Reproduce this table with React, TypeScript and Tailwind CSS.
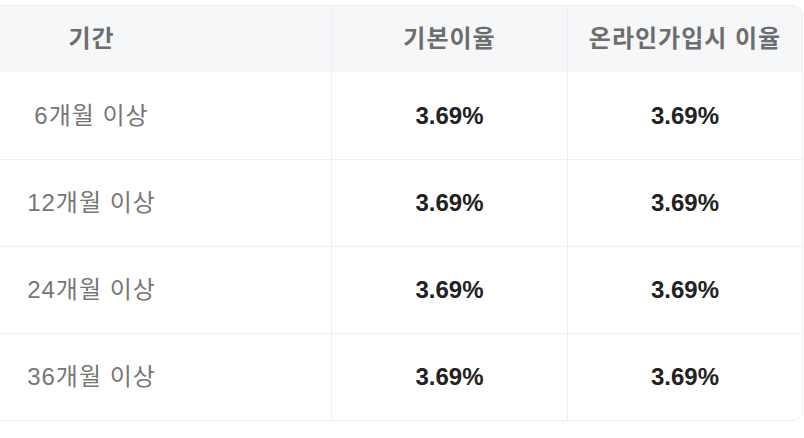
import React from "react";

const rows = [
    { term: "6개월 이상", base: "3.69%", online: "3.69%" },
    { term: "12개월 이상", base: "3.69%", online: "3.69%" },
    { term: "24개월 이상", base: "3.69%", online: "3.69%" },
    { term: "36개월 이상", base: "3.69%", online: "3.69%" },
];

const App = () => {
    return (
        <div className="w-[804px] h-[438px] overflow-hidden bg-white pt-[5px] font-['Liberation_Sans','Noto_Sans_CJK_KR',sans-serif]">
            <div className="ml-[-149px] w-[952px] border border-[#eceef1] rounded-[10px] overflow-hidden">
                {/* Header */}
                <div className="grid grid-cols-[479px_236px_1fr] h-[66px] bg-[#f6f7f9] text-[24px] font-bold text-[#6d6d6d] tracking-[1px]">
                    <div className="flex items-center justify-center">기간</div>
                    <div className="flex items-center justify-center border-l border-[#eceef1]">기본이율</div>
                    <div className="flex items-center justify-center border-l border-[#eceef1]">온라인가입시 이율</div>
                </div>

                {rows.map((row, i) => (
                    <div
                        key={row.term}
                        className={`grid grid-cols-[479px_236px_1fr] h-[87px] text-[24px] ${i > 0 ? "border-t border-[#eceef1]" : ""}`}
                    >
                        <div className="flex items-center justify-center text-[#777777] tracking-[1px]">{row.term}</div>
                        <div className="flex items-center justify-center border-l border-[#eceef1] font-bold text-[#222222]">
                            {row.base}
                        </div>
                        <div className="flex items-center justify-center border-l border-[#eceef1] font-bold text-[#222222]">
                            {row.online}
                        </div>
                    </div>
                ))}
            </div>
        </div>
    );
};

export default App;
